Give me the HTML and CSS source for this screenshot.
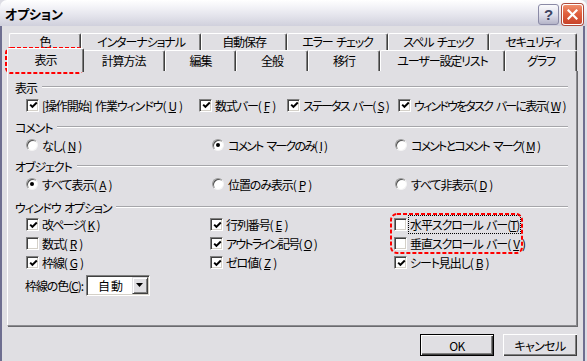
FILE: index.html
```html
<!DOCTYPE html>
<html lang="ja">
<head>
<meta charset="utf-8">
<title>オプション</title>
<link rel="stylesheet" href="styles.css">
</head>
<body>
<div class="window">
  <div class="titlebar">
    <span class="title">オプション</span>
    <div class="tbtns">
      <span class="tb help">?</span>
      <span class="tb close"><svg width="11" height="11" viewBox="0 0 11 11"><path d="M1.5 1.5 L9.5 9.5 M9.5 1.5 L1.5 9.5" stroke="#fff" stroke-width="2.2" stroke-linecap="square"/></svg></span>
    </div>
  </div>
  <div class="client">
    <div class="tabs">
      <div class="tabrow back">
        <div class="tab">色</div>
        <div class="tab">インターナショナル</div>
        <div class="tab">自動保存</div>
        <div class="tab">エラー チェック</div>
        <div class="tab">スペル チェック</div>
        <div class="tab">セキュリティ</div>
      </div>
      <div class="tabrow front">
        <div class="tab sel">表示</div>
        <div class="tab">計算方法</div>
        <div class="tab">編集</div>
        <div class="tab">全般</div>
        <div class="tab">移行</div>
        <div class="tab">ユーザー設定リスト</div>
        <div class="tab">グラフ</div>
      </div>
    </div>
    <div class="panel">
      <div class="glabel"><span>表示</span></div>
      <div class="opts cols-show">
        <label class="opt"><span class="cb"><svg width="9" height="9" viewBox="0 0 9 9"><path d="M1.2 3.6 L3.4 5.9 L7.8 1.5" fill="none" stroke="#000" stroke-width="2"/></svg></span>[操作開始] 作業ウィンドウ(<u>U</u>)</label>
        <label class="opt"><span class="cb"><svg width="9" height="9" viewBox="0 0 9 9"><path d="M1.2 3.6 L3.4 5.9 L7.8 1.5" fill="none" stroke="#000" stroke-width="2"/></svg></span>数式バー(<u>F</u>)</label>
        <label class="opt kana"><span class="cb"><svg width="9" height="9" viewBox="0 0 9 9"><path d="M1.2 3.6 L3.4 5.9 L7.8 1.5" fill="none" stroke="#000" stroke-width="2"/></svg></span>ステータス バー(<u>S</u>)</label>
        <label class="opt kana"><span class="cb"><svg width="9" height="9" viewBox="0 0 9 9"><path d="M1.2 3.6 L3.4 5.9 L7.8 1.5" fill="none" stroke="#000" stroke-width="2"/></svg></span>ウィンドウをタスク バーに表示(<u>W</u>)</label>
      </div>

      <div class="glabel g2"><span>コメント</span></div>
      <div class="opts cols-radio">
        <label class="opt"><span class="rd"></span>なし(<u>N</u>)</label>
        <label class="opt kana"><span class="rd on"></span>コメント マークのみ(<u>I</u>)</label>
        <label class="opt kana"><span class="rd"></span>コメントとコメント マーク(<u>M</u>)</label>
      </div>

      <div class="glabel g3"><span>オブジェクト</span></div>
      <div class="opts cols-radio">
        <label class="opt"><span class="rd on"></span>すべて表示(<u>A</u>)</label>
        <label class="opt"><span class="rd"></span>位置のみ表示(<u>P</u>)</label>
        <label class="opt"><span class="rd"></span>すべて非表示(<u>D</u>)</label>
      </div>

      <div class="glabel g4"><span>ウィンドウ オプション</span></div>
      <div class="opts cols-win tight">
        <label class="opt kana"><span class="cb"><svg width="9" height="9" viewBox="0 0 9 9"><path d="M1.2 3.6 L3.4 5.9 L7.8 1.5" fill="none" stroke="#000" stroke-width="2"/></svg></span>改ページ(<u>K</u>)</label>
        <label class="opt"><span class="cb"><svg width="9" height="9" viewBox="0 0 9 9"><path d="M1.2 3.6 L3.4 5.9 L7.8 1.5" fill="none" stroke="#000" stroke-width="2"/></svg></span>行列番号(<u>E</u>)</label>
        <label class="opt"><span class="cb"></span><span class="focus">水平スクロール バー(<u>T</u>)</span></label>
      </div>
      <div class="opts cols-win tight">
        <label class="opt"><span class="cb"></span>数式(<u>R</u>)</label>
        <label class="opt kana"><span class="cb"><svg width="9" height="9" viewBox="0 0 9 9"><path d="M1.2 3.6 L3.4 5.9 L7.8 1.5" fill="none" stroke="#000" stroke-width="2"/></svg></span>アウトライン記号(<u>O</u>)</label>
        <label class="opt"><span class="cb"></span>垂直スクロール バー(<u>V</u>)</label>
      </div>
      <div class="opts cols-win tight">
        <label class="opt"><span class="cb"><svg width="9" height="9" viewBox="0 0 9 9"><path d="M1.2 3.6 L3.4 5.9 L7.8 1.5" fill="none" stroke="#000" stroke-width="2"/></svg></span>枠線(<u>G</u>)</label>
        <label class="opt"><span class="cb"><svg width="9" height="9" viewBox="0 0 9 9"><path d="M1.2 3.6 L3.4 5.9 L7.8 1.5" fill="none" stroke="#000" stroke-width="2"/></svg></span>ゼロ値(<u>Z</u>)</label>
        <label class="opt"><span class="cb"><svg width="9" height="9" viewBox="0 0 9 9"><path d="M1.2 3.6 L3.4 5.9 L7.8 1.5" fill="none" stroke="#000" stroke-width="2"/></svg></span>シート見出し(<u>B</u>)</label>
      </div>

      <div class="combo-row">
        <span>枠線の色(<u>C</u>):</span>
        <div class="combo">
          <span class="combo-text">自動</span>
          <span class="combo-btn"><svg width="7" height="4" viewBox="0 0 7 4"><path d="M0 0 H7 L3.5 4 Z" fill="#000"/></svg></span>
        </div>
      </div>
    </div>
    <div class="btns">
      <button class="btn default">OK</button>
      <button class="btn">キャンセル</button>
    </div>
  </div>

  <svg class="mark mark-tab" width="79" height="27" viewBox="0 0 79 27"><rect x="1" y="1" width="77" height="25" rx="5" fill="none" stroke="#f00" stroke-width="2" stroke-dasharray="4 2"/></svg>
  <svg class="mark mark-scroll" width="133" height="41" viewBox="0 0 133 41"><rect x="1" y="1" width="131" height="39" rx="6" fill="none" stroke="#f00" stroke-width="2" stroke-dasharray="4 2"/></svg>
</div>
</body>
</html>
```

FILE: styles.css
```css
* { box-sizing: border-box; }
html, body { margin: 0; padding: 0; }
body {
  width: 587px;
  height: 361px;
  overflow: hidden;
  background: #dcdce4;
  font-family: "Noto Sans CJK JP", sans-serif;
  font-size: 12px;
  font-feature-settings: "palt" 1;
  letter-spacing: -1.1px;
  word-spacing: 2px;
  color: #000;
}
u { text-underline-offset: 1px; }
.window {
  position: relative;
  width: 587px;
  height: 361px;
}
.titlebar {
  height: 26px;
  display: flex;
  justify-content: space-between;
  align-items: flex-start;
  padding: 0 4px 0 5px;
  border-radius: 7px 7px 0 0;
  background: linear-gradient(to bottom, #ffffff 0%, #f4f4f8 25%, #e4e4ec 60%, #d0d0dc 100%);
}
.title {
  font-weight: bold;
  font-size: 13px;
  line-height: 28px;
  letter-spacing: -0.2px;
}
.tbtns { display: flex; gap: 3px; padding-top: 4px; }
.tb {
  width: 21px;
  height: 21px;
  border-radius: 3px;
  display: flex;
  align-items: center;
  justify-content: center;
}
.help {
  border: 1px solid #8a8aa6;
  background: linear-gradient(to bottom, #fbfbfd 0%, #dcdce8 55%, #b4b4c8 100%);
  color: #3c4462;
  font-family: "Liberation Sans", sans-serif;
  font-weight: bold;
  font-size: 15px;
  line-height: 1;
  letter-spacing: 0;
}
.close {
  border: 1px solid #fff;
  box-shadow: 0 0 0 1px #b04a3a;
  background: linear-gradient(to bottom, #f0906e 0%, #e0603f 45%, #c8432a 100%);
}
.client {
  width: 585px;
  height: 335px;
  border-left: 2px solid #6e6e90;
  border-right: 2px solid #6e6e90;
  background: #e0dfe3;
  padding: 7px 6px 0 5px;
}
.tabs { display: flex; flex-direction: column; }
.tabrow { display: grid; margin-left: 2px; }
.tabrow.back { height: 17px; grid-template-columns: 72px 120px 86px 101px 101px 88px; }
.tabrow.front { height: 20px; grid-template-columns: 73px 83px 71px 72px 72px 125px 72px; }
.tab {
  background: #e0dfe3;
  border-top: 1px solid #fff;
  border-left: 1px solid #fff;
  border-right: 1px solid #404040;
  box-shadow: inset -1px 0 0 #808080;
  border-radius: 2px 2px 0 0;
  text-align: center;
  white-space: nowrap;
  line-height: 17px;
}
.back .tab { line-height: 16px; }
.front .tab { line-height: 20px; }
.tab.sel {
  position: relative;
  z-index: 2;
  margin: -2px -2px -1px -2px;
  line-height: 22px;
}
.panel {
  width: 570px;
  height: 256px;
  border-top: 1px solid #fff;
  border-left: 1px solid #fff;
  border-right: 1px solid #8c8c90;
  border-bottom: 1px solid #8c8c90;
  box-shadow: 1px 1px 0 #6a6a6e;
  padding: 8px 8px 0 7px;
}
.glabel {
  display: flex;
  align-items: center;
  height: 16px;
  white-space: nowrap;
}
.glabel::after {
  content: "";
  flex: 1;
  height: 0;
  border-top: 1px solid #a6a6aa;
  border-bottom: 1px solid #fff;
  margin-left: 5px;
}
.g2 { margin-top: 4px; }
.g3 { margin-top: 3px; }
.g4 { margin-top: 5px; }
.opts {
  display: grid;
  align-items: center;
  height: 20px;
  margin-left: 11px;
}
.opts.tight { height: 19px; }
.cols-show { grid-template-columns: 173px 88px 111px 1fr; }
.cols-radio { grid-template-columns: 186px 183px 1fr; }
.cols-win { grid-template-columns: 184px 184px 1fr; }
.opt {
  display: flex;
  align-items: center;
  gap: 3px;
  white-space: nowrap;
}
.opt.kana { letter-spacing: -1.8px; word-spacing: 3px; }
.cb {
  width: 13px;
  height: 13px;
  flex: none;
  background: #fff;
  border: 1px solid;
  border-color: #808080 #fff #fff #808080;
  box-shadow: inset 1px 1px 0 #404040, inset -1px -1px 0 #d4d0c8;
  display: flex;
  align-items: center;
  justify-content: center;
  padding: 1px 0 0 1px;
}
.cb svg { display: block; }
.rd {
  width: 12px;
  height: 12px;
  flex: none;
  margin-right: 1px;
  border-radius: 50%;
  background: #fff;
  border: 1px solid;
  border-color: #9a9a9a #f4f4f4 #f4f4f4 #9a9a9a;
  box-shadow: inset 1px 1px 0 #505050;
  position: relative;
}
.rd.on::after {
  content: "";
  position: absolute;
  left: 3px;
  top: 3px;
  width: 4px;
  height: 4px;
  border-radius: 50%;
  background: #000;
}
.focus {
  outline: 1px dotted #000;
  outline-offset: 0;
  padding: 0 1px;
  margin-left: -1px;
}
.combo-row {
  display: flex;
  align-items: center;
  height: 22px;
  margin-top: 2px;
  margin-left: 10px;
  white-space: nowrap;
}
.combo {
  margin-left: 3px;
  width: 64px;
  height: 21px;
  background: #fff;
  border: 1px solid;
  border-color: #808080 #fff #fff #808080;
  box-shadow: inset 1px 1px 0 #404040, inset -1px -1px 0 #d4d0c8;
  display: flex;
  align-items: center;
  justify-content: space-between;
  padding: 1px 1px 1px 11px;
}
.combo-text { line-height: 17px; letter-spacing: 1px; }
.combo-btn {
  width: 16px;
  height: 17px;
  background: #e0dfe3;
  border: 1px solid;
  border-color: #e0dfe3 #404040 #404040 #e0dfe3;
  box-shadow: inset 1px 1px 0 #fff, inset -1px -1px 0 #808080;
  display: flex;
  align-items: center;
  justify-content: center;
}
.combo-btn svg { display: block; }
.btns {
  display: flex;
  justify-content: flex-end;
  gap: 9px;
  margin-top: 8px;
}
.btn {
  width: 74px;
  height: 22px;
  padding: 0;
  font: inherit;
  font-feature-settings: "palt" 1;
  letter-spacing: -0.6px;
  color: #000;
  background: #e0dfe3;
  border: none;
  box-shadow: inset 1px 1px 0 #fff, inset -1px -1px 0 #404040, inset -2px -2px 0 #808080;
}
.btn.default {
  border: 1px solid #000;
}
.mark { position: absolute; }
.mark-tab { left: 5px; top: 47px; }
.mark-scroll { left: 390px; top: 213px; }
```
